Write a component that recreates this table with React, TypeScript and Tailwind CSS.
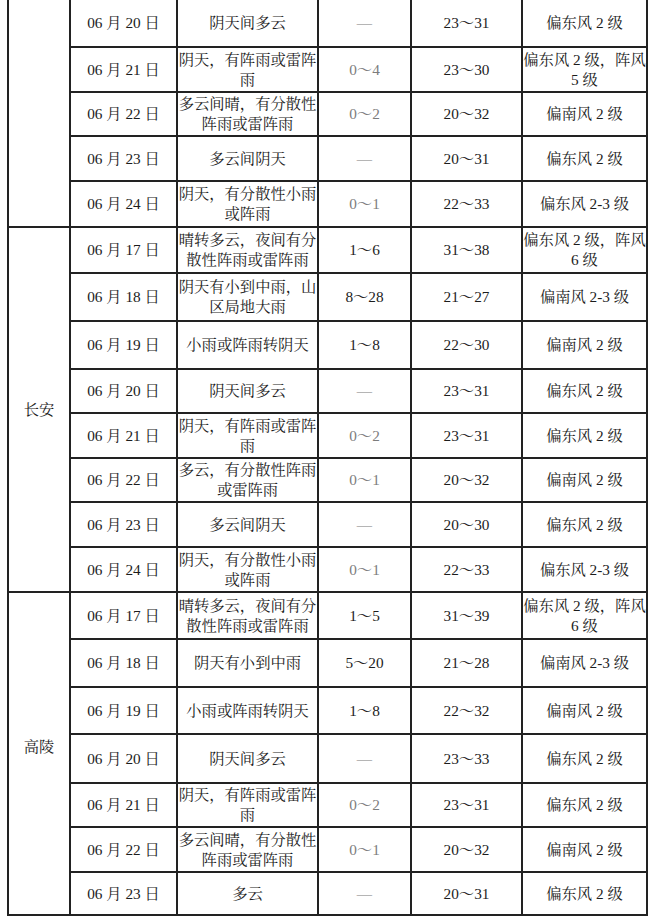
import React from "react";

type Row = {
  d: string;
  w: string[];
  p: string;
  pg: boolean;
  t: string;
  f: string[];
};

type Group = { label: string; span: string; labelPad: string; rows: Row[] };

const groups: Group[] = [
  {
    label: "",
    span: "row-span-5",
    labelPad: "",
    rows: [
      { d: "20", w: ["阴天间多云"], p: "—", pg: true, t: "23～31", f: ["偏东风 2 级"] },
      { d: "21", w: ["阴天，有阵雨或雷阵", "雨"], p: "0～4", pg: true, t: "23～30", f: ["偏东风 2 级，阵风", "5 级"] },
      { d: "22", w: ["多云间晴，有分散性", "阵雨或雷阵雨"], p: "0～2", pg: true, t: "20～32", f: ["偏南风 2 级"] },
      { d: "23", w: ["多云间阴天"], p: "—", pg: true, t: "20～31", f: ["偏东风 2 级"] },
      { d: "24", w: ["阴天，有分散性小雨", "或阵雨"], p: "0～1", pg: true, t: "22～33", f: ["偏东风 2-3 级"] },
    ],
  },
  {
    label: "长安",
    span: "row-span-8",
    labelPad: "",
    rows: [
      { d: "17", w: ["晴转多云，夜间有分", "散性阵雨或雷阵雨"], p: "1～6", pg: false, t: "31～38", f: ["偏东风 2 级，阵风", "6 级"] },
      { d: "18", w: ["阴天有小到中雨，山", "区局地大雨"], p: "8～28", pg: false, t: "21～27", f: ["偏南风 2-3 级"] },
      { d: "19", w: ["小雨或阵雨转阴天"], p: "1～8", pg: false, t: "22～30", f: ["偏南风 2 级"] },
      { d: "20", w: ["阴天间多云"], p: "—", pg: true, t: "23～31", f: ["偏东风 2 级"] },
      { d: "21", w: ["阴天，有阵雨或雷阵", "雨"], p: "0～2", pg: true, t: "23～31", f: ["偏东风 2 级"] },
      { d: "22", w: ["多云，有分散性阵雨", "或雷阵雨"], p: "0～1", pg: true, t: "20～32", f: ["偏南风 2 级"] },
      { d: "23", w: ["多云间阴天"], p: "—", pg: true, t: "20～30", f: ["偏东风 2 级"] },
      { d: "24", w: ["阴天，有分散性小雨", "或阵雨"], p: "0～1", pg: true, t: "22～33", f: ["偏东风 2-3 级"] },
    ],
  },
  {
    label: "高陵",
    span: "row-span-7",
    labelPad: "pb-[13px]",
    rows: [
      { d: "17", w: ["晴转多云，夜间有分", "散性阵雨或雷阵雨"], p: "1～5", pg: false, t: "31～39", f: ["偏东风 2 级，阵风", "6 级"] },
      { d: "18", w: ["阴天有小到中雨"], p: "5～20", pg: false, t: "21～28", f: ["偏南风 2-3 级"] },
      { d: "19", w: ["小雨或阵雨转阴天"], p: "1～8", pg: false, t: "22～32", f: ["偏南风 2 级"] },
      { d: "20", w: ["阴天间多云"], p: "—", pg: true, t: "23～33", f: ["偏东风 2 级"] },
      { d: "21", w: ["阴天，有阵雨或雷阵", "雨"], p: "0～2", pg: true, t: "23～31", f: ["偏东风 2 级"] },
      { d: "22", w: ["多云间晴，有分散性", "阵雨或雷阵雨"], p: "0～1", pg: true, t: "20～32", f: ["偏南风 2 级"] },
      { d: "23", w: ["多云"], p: "—", pg: true, t: "20～31", f: ["偏东风 2 级"] },
    ],
  },
];

const cell =
  "bg-white flex flex-col items-center justify-center text-center whitespace-nowrap leading-[20px]";

function Lines({ lines }: { lines: string[] }) {
  return (
    <>
      {lines.map((l, i) => (
        <span key={i}>{l}</span>
      ))}
    </>
  );
}

export default function App() {
  return (
    <div className="w-[657px] h-[917px] bg-white overflow-hidden">
      <div
        className="ml-[7px] w-[641px] bg-[#222] grid gap-[2px] px-[2px] pb-[2px] grid-cols-[60px_105px_139px_91px_109px_123px] grid-rows-[46px_43px_42px_43px_44px_44px_46px_46px_42px_43px_42px_43px_43px_45px_46px_45px_47px_42px_43px_41px] text-[15.3px] text-[#1c1c1c]"
        style={{
          fontFamily:
            '"Liberation Serif", "Noto Serif CJK SC", "Noto Sans CJK SC", serif',
        }}
      >
        {groups.map((g, gi) => (
          <React.Fragment key={gi}>
            <div className={`${cell} ${g.span} ${g.labelPad}`}>{g.label}</div>
            {g.rows.map((r, ri) => (
              <React.Fragment key={ri}>
                <div className={cell}>{`06 月 ${r.d} 日`}</div>
                <div className={cell}>
                  <Lines lines={r.w} />
                </div>
                <div className={`${cell} ${r.pg ? "text-[#7c7c7c]" : ""}`}>{r.p}</div>
                <div className={cell}>{r.t}</div>
                <div className={cell}>
                  <Lines lines={r.f} />
                </div>
              </React.Fragment>
            ))}
          </React.Fragment>
        ))}
      </div>
    </div>
  );
}
